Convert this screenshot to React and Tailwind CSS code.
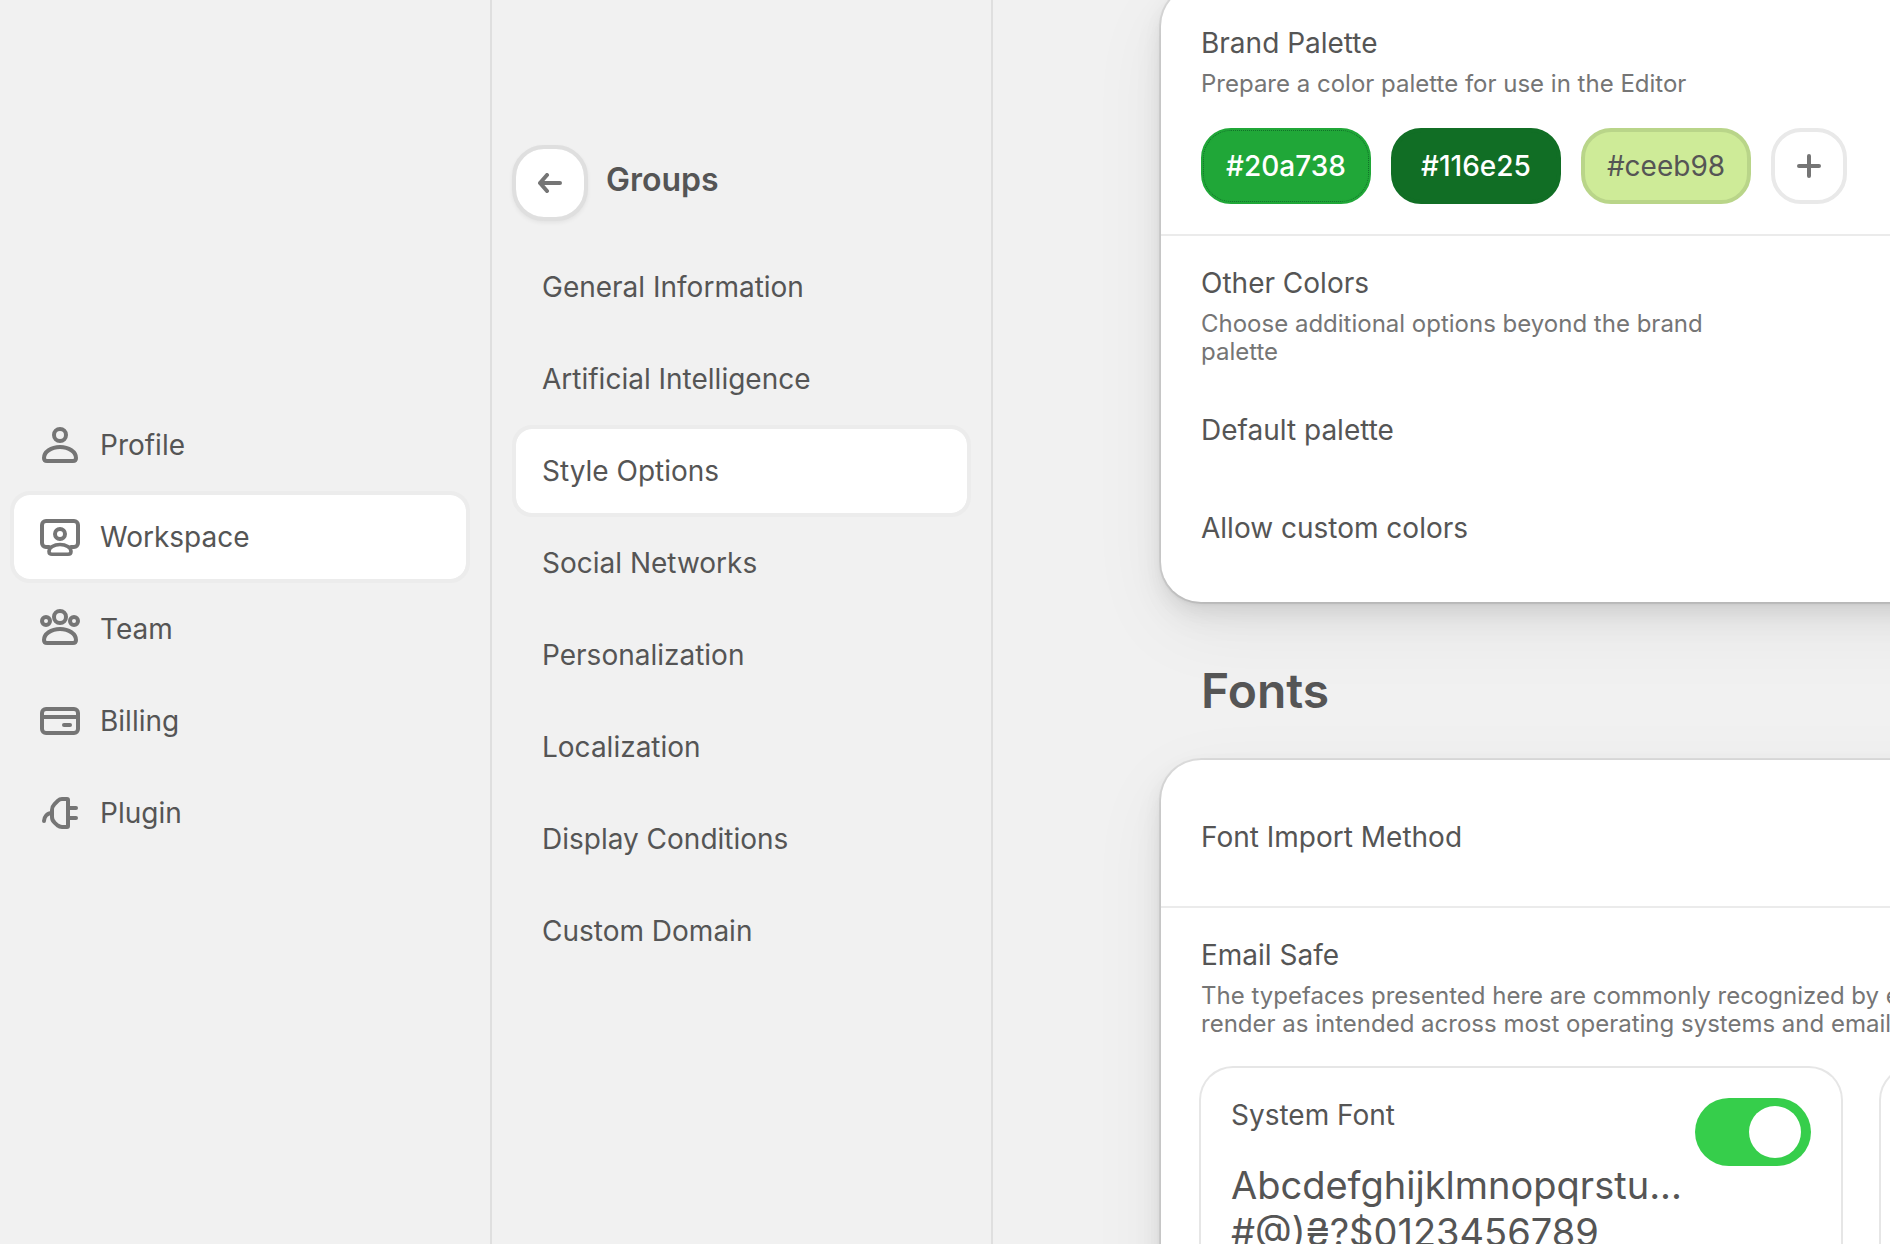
import React from "react";

const stroke = {
  fill: "none",
  stroke: "currentColor",
  strokeWidth: 4,
  strokeLinecap: "round",
  strokeLinejoin: "round",
};

const Icon = ({ children }) => (
  <svg viewBox="0 0 40 40" className="size-10 shrink-0 text-[#757575]" aria-hidden="true" {...stroke}>
    {children}
  </svg>
);

const ProfileIcon = () => (
  <Icon>
    <circle cx="20" cy="10" r="6" />
    <path d="M20 22c9 0 16 5 16 11 0 2-1 3-3 3H7c-2 0-3-1-3-3 0-6 7-11 16-11z" />
  </Icon>
);

const WorkspaceIcon = () => (
  <Icon>
    <path d="M9 30H6a4 4 0 0 1-4-4V8a4 4 0 0 1 4-4h28a4 4 0 0 1 4 4v18a4 4 0 0 1-4 4h-3" />
    <circle cx="20" cy="17" r="5" />
    <path strokeWidth="3.6" d="M20 27.500c6 0 11 3 11 7 0 2-1 2.700-3 2.700H12c-2 0-3-.7-3-2.700C9 30.500 14 27.500 20 27.500z" />
  </Icon>
);

const TeamIcon = () => (
  <Icon>
    <circle cx="20" cy="8" r="6" />
    <circle cx="6" cy="12" r="4" />
    <circle cx="34" cy="12" r="4" />
    <path d="M20 20c9 0 16 5 16 11 0 2-1 3-3 3H7c-2 0-3-1-3-3 0-6 7-11 16-11z" />
  </Icon>
);

const BillingIcon = () => (
  <Icon>
    <rect x="2" y="8" width="36" height="24" rx="4" />
    <path strokeLinecap="butt" d="M2 16h36" />
    <path d="M24 24h6" />
  </Icon>
);

const PluginIcon = () => (
  <Icon>
    <path d="M28 7v26a1 1 0 0 1-1 1h-5c-2 0-3-.4-4.500-1.600l-3-2.800C12.700 28 12 26.500 12 24v-7c0-2.500.7-4 2.500-5.800l3.500-3.500C19.300 6.400 20.300 6 22 6h5a1 1 0 0 1 1 1z" />
    <path d="M28 15h8M28 25h8M4 28c0-4 3-8 8-8" />
  </Icon>
);

const mainNav = [
  { label: "Profile", icon: ProfileIcon },
  { label: "Workspace", icon: WorkspaceIcon, active: true },
  { label: "Team", icon: TeamIcon },
  { label: "Billing", icon: BillingIcon },
  { label: "Plugin", icon: PluginIcon },
];

const groupNav = [
  { label: "General Information" },
  { label: "Artificial Intelligence" },
  { label: "Style Options", active: true },
  { label: "Social Networks" },
  { label: "Personalization" },
  { label: "Localization" },
  { label: "Display Conditions" },
  { label: "Custom Domain" },
];

const NavItem = ({ label, icon: Glyph, active }) => (
  <li>
    <a
      href="#"
      aria-current={active ? "page" : undefined}
      className={`flex h-[92px] items-center gap-5 rounded-[20px] border-4 px-[26px] ${
        active ? "border-[#ececec] bg-white bg-clip-padding" : "border-transparent"
      }`}
    >
      {Glyph && <Glyph />}
      <span>{label}</span>
    </a>
  </li>
);

const swatches = [
  {
    hex: "#20a738",
    style: "border-[#20a738] bg-[#20a738] font-medium text-white outline-1 outline-dotted -outline-offset-3 outline-[#12702a]",
  },
  { hex: "#116e25", style: "border-[#116e25] bg-[#116e25] font-medium text-white" },
  { hex: "#ceeb98", style: "border-[#b9d589] bg-[#ceeb98] text-[#555]" },
];

const Card = ({ children }) => (
  <section className="w-[1400px] rounded-[40px] bg-white shadow-[0_0_0_2px_rgba(0,0,0,0.07),0_2px_4px_rgba(0,0,0,0.08),0_8px_20px_rgba(0,0,0,0.05),0_16px_32px_rgba(0,0,0,0.06),0_24px_80px_rgba(0,0,0,0.06)]">
    {children}
  </section>
);

const FontCard = ({ name, sample, symbols }) => (
  <label className="flex w-[640px] shrink-0 justify-between rounded-[32px] p-[30px] ring-2 ring-[#e6e6e6]">
    <span className="flex flex-col">
      <span className="leading-[34px]">{name}</span>
      <span className="mt-[30px] text-[38px] leading-[47px] whitespace-nowrap">
        {sample}
        <br />
        {symbols}
      </span>
    </span>
    <span className="relative h-[68px] w-[116px] shrink-0">
      <input type="checkbox" role="switch" defaultChecked className="peer size-full appearance-none rounded-full bg-[#cccccc] checked:bg-[#36ce4b]" />
      <span className="pointer-events-none absolute top-2 left-2 size-[52px] rounded-full bg-white peer-checked:left-auto peer-checked:right-[10px]" />
    </span>
  </label>
);

export default function App() {
  return (
    <div className="flex h-screen overflow-hidden bg-[#f1f1f1] font-['Inter',sans-serif] text-[28px] text-[#555]">
      <aside className="flex w-[492px] shrink-0 flex-col border-r-2 border-[#dfdfdf] pt-[399px] pr-5 pl-[10px]">
        <nav aria-label="Settings">
          <ul>
            {mainNav.map((item) => (
              <NavItem key={item.label} {...item} />
            ))}
          </ul>
        </nav>
      </aside>

      <aside className="flex w-[501px] shrink-0 flex-col border-r-2 border-[#dfdfdf] px-5 pt-[145px]">
        <header className="flex items-center gap-[18px]">
          <button
            type="button"
            aria-label="Back"
            className="flex size-[76px] items-center justify-center rounded-[32px] border-4 border-[#dfdfdf] bg-white bg-clip-padding text-[#757575] shadow-[0_2px_4px_rgba(0,0,0,0.06)]"
          >
            <svg viewBox="0 0 24 20" className="h-5 w-6" aria-hidden="true" {...stroke}>
              <path d="M22 10H2M9 2L2 10l7 8" />
            </svg>
          </button>
          <h2 className="pb-[6px] text-[32px] font-semibold">Groups</h2>
        </header>
        <nav aria-label="Groups" className="mt-5">
          <ul>
            {groupNav.map((item) => (
              <NavItem key={item.label} {...item} />
            ))}
          </ul>
        </nav>
      </aside>

      <main className="-mt-[14px] min-w-0 flex-1 overflow-hidden pl-[168px]">
        <Card>
          <div className="border-b-2 border-[#ebebeb] px-10 pt-[41px] pb-[30px]">
            <h3 className="leading-8">Brand Palette</h3>
            <p className="mt-[11px] text-[24px] leading-7 text-[#757575]">Prepare a color palette for use in the Editor</p>
            <div className="mt-[30px] flex gap-5">
              {swatches.map(({ hex, style }) => (
                <button key={hex} type="button" className={`h-[76px] w-[170px] rounded-[30px] border-4 ${style}`}>
                  {hex}
                </button>
              ))}
              <button
                type="button"
                aria-label="Add color"
                className="flex size-[76px] items-center justify-center rounded-[30px] border-4 border-[#e9e9e9] bg-white text-[#757575]"
              >
                <svg viewBox="0 0 24 24" className="size-6" aria-hidden="true" {...stroke}>
                  <path d="M12 2v20M2 12h20" />
                </svg>
              </button>
            </div>
          </div>
          <div className="px-10 pt-[31px] pb-[58px]">
            <h3 className="leading-8">Other Colors</h3>
            <p className="mt-[11px] w-[520px] text-[24px] leading-7 text-[#757575]">
              Choose additional options beyond the brand palette
            </p>
            <p className="mt-12 leading-8">Default palette</p>
            <p className="mt-[66px] leading-8">Allow custom colors</p>
          </div>
        </Card>

        <h2 className="mt-[60px] mb-10 ml-10 text-[48px] leading-[58px] font-semibold">Fonts</h2>

        <Card>
          <div className="border-b-2 border-[#ebebeb] px-10 pt-[61px] pb-[53px]">
            <h3 className="leading-8">Font Import Method</h3>
          </div>
          <div className="px-10 pt-[31px] pb-10">
            <h3 className="leading-8">Email Safe</h3>
            <p className="mt-[11px] text-[24px] leading-7 whitespace-nowrap text-[#757575]">
              The typefaces presented here are commonly recognized by email clients and will
              <br />
              render as intended across most operating systems and email clients.
            </p>
            <div className="mt-[30px] flex gap-10">
              <FontCard name="System Font" sample="Abcdefghijklmnopqrstu..." symbols="#@)₴?$0123456789" />
              <FontCard name="Arial" sample="Abcdefghijklmnopqrstu..." symbols="#@)₴?$0123456789" />
            </div>
          </div>
        </Card>
      </main>
    </div>
  );
}
